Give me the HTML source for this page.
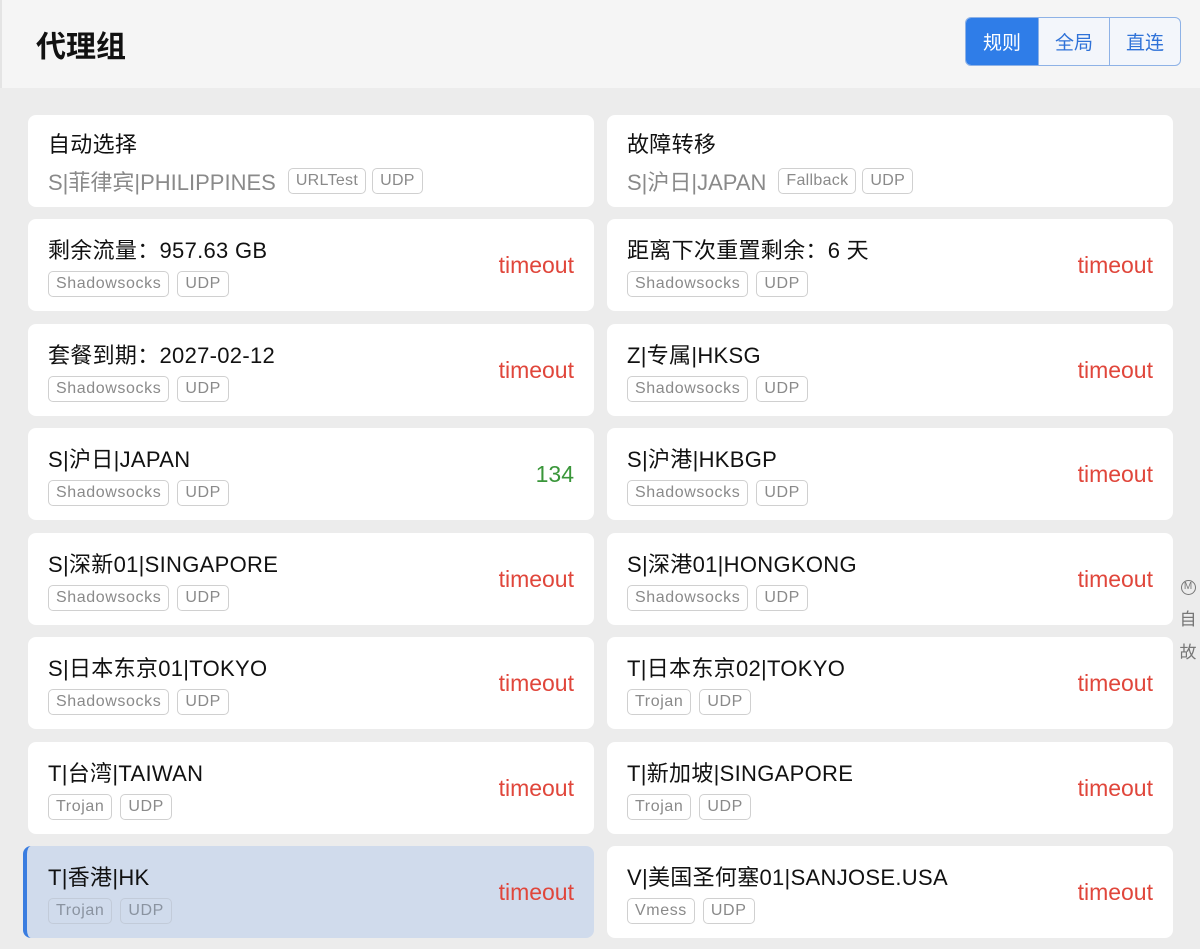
<!DOCTYPE html>
<html><head><meta charset="utf-8"><style>
*{box-sizing:border-box;margin:0;padding:0}
body{width:1200px;height:949px;overflow:hidden;background:#ececec;font-family:"Liberation Sans","Noto Sans CJK SC",sans-serif;position:relative}
.hdr{position:absolute;left:0;top:0;width:1200px;height:88px;background:#f5f5f5;border-left:2px solid #e4e4e4}
.hdr h1{position:absolute;left:34px;top:22px;font-size:30px;font-weight:bold;color:#111}
.seg{position:absolute;left:963px;top:17px;height:49px;display:flex;border:1.5px solid #8eb2e6;border-radius:6px;overflow:hidden;background:#f3f6fb}
.seg div{width:71px;display:flex;align-items:center;justify-content:center;font-size:19px;color:#2f72d8;border-left:1.5px solid #8eb2e6}
.seg div:first-child{background:#2f7de8;color:#fff;border-left:none;width:72px}
.card{position:absolute;width:566px;height:92px;background:#fff;border-radius:8px}
.t{position:absolute;left:20px;top:14px;font-size:22px;color:#111;white-space:nowrap;letter-spacing:0.3px}
.tags{position:absolute;left:20px;top:52px;display:flex;gap:8px}
.tag{height:26px;padding:0 7px;border:1.5px solid #d0d0d0;border-radius:5px;font-size:16px;color:#8a8a8a;line-height:23px;letter-spacing:0.6px}
.r{position:absolute;right:20px;top:33px;font-size:23px;color:#e0463b}
.g{color:#3a963a}
.sub{position:absolute;left:20px;top:50px;font-size:22px;color:#8a8a8a;display:flex;align-items:center;gap:12px;white-space:nowrap}
.sub .tags{position:static;display:flex;gap:6px}
.sub .tag{letter-spacing:0.3px}
.sel{background:#d0dbec;border-left:4px solid #3a7de0;left:23px!important;width:571px!important}
.sel .tag{border-color:#c2cbd9;color:#8a93a0}
.side{position:absolute;left:1176px;top:560px;width:24px;text-align:center;color:#777;font-size:17px}
</style></head><body>
<div class="hdr"><h1>代理组</h1>
<div class="seg"><div>规则</div><div>全局</div><div>直连</div></div></div>

<div class="card" style="left:28px;top:115px"><div class="t" style="top:12px">自动选择</div><div class="sub"><span>S|菲律宾|PHILIPPINES</span><div class="tags"><span class="tag">URLTest</span><span class="tag">UDP</span></div></div></div>
<div class="card" style="left:607px;top:115px"><div class="t" style="top:12px">故障转移</div><div class="sub"><span>S|沪日|JAPAN</span><div class="tags"><span class="tag">Fallback</span><span class="tag">UDP</span></div></div></div>

<div class="card" style="left:28px;top:219px"><div class="t">剩余流量：957.63 GB</div><div class="tags"><span class="tag">Shadowsocks</span><span class="tag">UDP</span></div><div class="r">timeout</div></div>
<div class="card" style="left:607px;top:219px"><div class="t">距离下次重置剩余：6 天</div><div class="tags"><span class="tag">Shadowsocks</span><span class="tag">UDP</span></div><div class="r">timeout</div></div>

<div class="card" style="left:28px;top:324px"><div class="t">套餐到期：2027-02-12</div><div class="tags"><span class="tag">Shadowsocks</span><span class="tag">UDP</span></div><div class="r">timeout</div></div>
<div class="card" style="left:607px;top:324px"><div class="t">Z|专属|HKSG</div><div class="tags"><span class="tag">Shadowsocks</span><span class="tag">UDP</span></div><div class="r">timeout</div></div>

<div class="card" style="left:28px;top:428px"><div class="t">S|沪日|JAPAN</div><div class="tags"><span class="tag">Shadowsocks</span><span class="tag">UDP</span></div><div class="r g">134</div></div>
<div class="card" style="left:607px;top:428px"><div class="t">S|沪港|HKBGP</div><div class="tags"><span class="tag">Shadowsocks</span><span class="tag">UDP</span></div><div class="r">timeout</div></div>

<div class="card" style="left:28px;top:533px"><div class="t">S|深新01|SINGAPORE</div><div class="tags"><span class="tag">Shadowsocks</span><span class="tag">UDP</span></div><div class="r">timeout</div></div>
<div class="card" style="left:607px;top:533px"><div class="t">S|深港01|HONGKONG</div><div class="tags"><span class="tag">Shadowsocks</span><span class="tag">UDP</span></div><div class="r">timeout</div></div>

<div class="card" style="left:28px;top:637px"><div class="t">S|日本东京01|TOKYO</div><div class="tags"><span class="tag">Shadowsocks</span><span class="tag">UDP</span></div><div class="r">timeout</div></div>
<div class="card" style="left:607px;top:637px"><div class="t">T|日本东京02|TOKYO</div><div class="tags"><span class="tag">Trojan</span><span class="tag">UDP</span></div><div class="r">timeout</div></div>

<div class="card" style="left:28px;top:742px"><div class="t">T|台湾|TAIWAN</div><div class="tags"><span class="tag">Trojan</span><span class="tag">UDP</span></div><div class="r">timeout</div></div>
<div class="card" style="left:607px;top:742px"><div class="t">T|新加坡|SINGAPORE</div><div class="tags"><span class="tag">Trojan</span><span class="tag">UDP</span></div><div class="r">timeout</div></div>

<div class="card sel" style="top:846px"><div class="t" style="left:21px">T|香港|HK</div><div class="tags" style="left:21px"><span class="tag">Trojan</span><span class="tag">UDP</span></div><div class="r">timeout</div></div>
<div class="card" style="left:607px;top:846px"><div class="t">V|美国圣何塞01|SANJOSE.USA</div><div class="tags"><span class="tag">Vmess</span><span class="tag">UDP</span></div><div class="r">timeout</div></div>

<div class="side"><div style="border:1.5px solid #777;border-radius:50%;width:15px;height:15px;line-height:12px;margin:20px auto 10px;font-size:10px">M</div><div style="margin-bottom:8px">自</div><div>故</div></div>
</body></html>
